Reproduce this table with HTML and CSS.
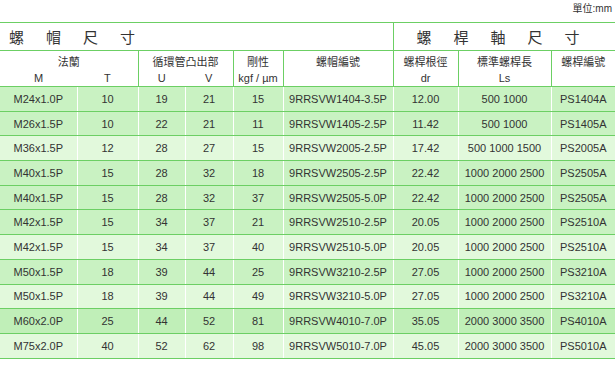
FILE: index.html
```html
<!DOCTYPE html>
<html>
<head>
<meta charset="utf-8">
<link rel="stylesheet" href="styles.css">
</head>
<body>
<div class="unit">單位:mm</div>
<table class="spec">
  <colgroup>
    <col class="c77"><col class="c61"><col class="c47"><col class="c48"><col class="c50"><col class="c110"><col class="c65"><col class="c93"><col class="c64">
  </colgroup>
  <thead>
    <tr class="title">
      <th colspan="6" class="t-left">螺帽尺寸</th>
      <th colspan="3" class="t-right sep">螺桿軸尺寸</th>
    </tr>
    <tr class="h1">
      <th colspan="2">法蘭</th>
      <th colspan="2" class="sep">循環管凸出部</th>
      <th class="sep">剛性</th>
      <th class="sep" rowspan="2">螺帽編號</th>
      <th class="sep">螺桿根徑</th>
      <th class="sep">標準螺桿長</th>
      <th class="sep" rowspan="2">螺桿編號</th>
    </tr>
    <tr class="h2">
      <th>M</th>
      <th>T</th>
      <th class="sep">U</th>
      <th>V</th>
      <th class="sep">kgf / µm</th>
      <th class="sep">dr</th>
      <th class="sep">Ls</th>
    </tr>
  </thead>
  <tbody>
    <tr class="g"><td>M24x1.0P</td><td>10</td><td>19</td><td>21</td><td>15</td><td>9RRSVW1404-3.5P</td><td>12.00</td><td>500 1000</td><td>PS1404A</td></tr>
    <tr class="g"><td>M26x1.5P</td><td>10</td><td>22</td><td>21</td><td>11</td><td>9RRSVW1405-2.5P</td><td>11.42</td><td>500 1000</td><td>PS1405A</td></tr>
    <tr class="l"><td>M36x1.5P</td><td>12</td><td>28</td><td>27</td><td>15</td><td>9RRSVW2005-2.5P</td><td>17.42</td><td>500 1000 1500</td><td>PS2005A</td></tr>
    <tr class="g"><td>M40x1.5P</td><td>15</td><td>28</td><td>32</td><td>18</td><td>9RRSVW2505-2.5P</td><td>22.42</td><td>1000 2000 2500</td><td>PS2505A</td></tr>
    <tr class="g"><td>M40x1.5P</td><td>15</td><td>28</td><td>32</td><td>37</td><td>9RRSVW2505-5.0P</td><td>22.42</td><td>1000 2000 2500</td><td>PS2505A</td></tr>
    <tr class="g"><td>M42x1.5P</td><td>15</td><td>34</td><td>37</td><td>21</td><td>9RRSVW2510-2.5P</td><td>20.05</td><td>1000 2000 2500</td><td>PS2510A</td></tr>
    <tr class="l"><td>M42x1.5P</td><td>15</td><td>34</td><td>37</td><td>40</td><td>9RRSVW2510-5.0P</td><td>20.05</td><td>1000 2000 2500</td><td>PS2510A</td></tr>
    <tr class="g"><td>M50x1.5P</td><td>18</td><td>39</td><td>44</td><td>25</td><td>9RRSVW3210-2.5P</td><td>27.05</td><td>1000 2000 2500</td><td>PS3210A</td></tr>
    <tr class="l"><td>M50x1.5P</td><td>18</td><td>39</td><td>44</td><td>49</td><td>9RRSVW3210-5.0P</td><td>27.05</td><td>1000 2000 2500</td><td>PS3210A</td></tr>
    <tr class="d"><td>M60x2.0P</td><td>25</td><td>44</td><td>52</td><td>81</td><td>9RRSVW4010-7.0P</td><td>35.05</td><td>2000 3000 3500</td><td>PS4010A</td></tr>
    <tr class="l"><td>M75x2.0P</td><td>40</td><td>52</td><td>62</td><td>98</td><td>9RRSVW5010-7.0P</td><td>45.05</td><td>2000 3000 3500</td><td>PS5010A</td></tr>
  </tbody>
</table>
</body>
</html>
```

FILE: styles.css
```css
html, body {
  margin: 0;
  padding: 0;
  background: #ffffff;
}
body {
  width: 615px;
  font-family: "Liberation Sans", Arial, "Noto Sans CJK TC", sans-serif;
  color: #333333;
}
.unit {
  height: 22px;
  box-sizing: border-box;
  padding: 2px 3px 0 0;
  text-align: right;
  font-size: 10px;
  line-height: 13px;
  color: #333;
}
.spec {
  width: 615px;
  border-collapse: collapse;
  table-layout: fixed;
  font-size: 11px;
}
.c77 { width: 77px; }
.c61 { width: 61px; }
.c47 { width: 47px; }
.c48 { width: 48px; }
.c50 { width: 50px; }
.c110 { width: 110px; }
.c65 { width: 65px; }
.c93 { width: 93px; }
.c64 { width: 64px; }

.spec th {
  font-weight: normal;
  padding: 0;
  text-align: center;
  background: #ffffff;
}
.spec .sep {
  border-left: 1px solid #6ccf64;
}
.title th {
  height: 27px;
  border-top: 1px solid #6ccf64;
  border-bottom: 1px solid #6ccf64;
  font-size: 15px;
  letter-spacing: 22px;
  font-family: "Noto Sans CJK TC", sans-serif;
  color: #333;
}
.title .t-left {
  text-align: left;
  padding-left: 9px;
}
.title .t-right {
  text-align: left;
  padding-left: 23px;
}
.h1 th {
  height: 17px;
  padding-top: 3px;
  vertical-align: top;
  font-family: "Noto Sans CJK TC", sans-serif;
  font-size: 11px;
  line-height: 14px;
}
.h2 th {
  height: 13px;
  padding-bottom: 1px;
  vertical-align: top;
  line-height: 14px;
  border-bottom: 1px solid #6ccf64;
}
.h1 th[rowspan] {
  border-bottom: 1px solid #6ccf64;
}
.spec td {
  height: 23.7px;
  padding: 0;
  text-align: center;
  vertical-align: middle;
  border-bottom: 1px solid #6ccf64;
  border-left: 1px solid #ffffff;
  line-height: 14px;
}
.spec td:first-child {
  border-left: none;
}
.spec tr.g td { background: #c9f2c2; }
.spec tr.l td { background: #e2f9dc; }
.spec tr.d td { background: #c0efb8; }
```
